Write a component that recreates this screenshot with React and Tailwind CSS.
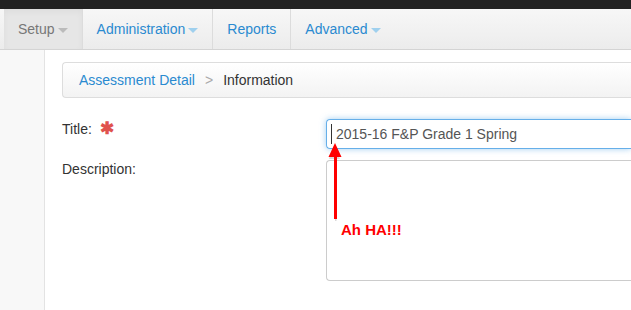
import React from 'react';

const Caret = ({ color }) => (
  <span
    className="inline-block ml-[3px] mt-[2px] w-0 h-0 border-l-[5px] border-r-[5px] border-t-[5px] border-l-transparent border-r-transparent"
    style={{ borderTopColor: color }}
  />
);

const NavItem = ({ label, active, caret, last }) => (
  <div
    className={`flex items-center h-full px-[14px] border-r ${
      last ? 'border-transparent' : 'border-[#dcdcdc]'
    } ${active ? 'bg-[#e6e6e6] text-[#777] shadow-[inset_0_3px_6px_rgba(0,0,0,0.04)]' : 'text-[#2a8ad0]'}`}
  >
    <span>{label}</span>
    {caret && <Caret color={active ? '#bbbbbb' : '#9fd0ee'} />}
  </div>
);

export default function App() {
  return (
    <div className="w-[631px] h-[310px] overflow-hidden bg-white font-['Liberation_Sans',Arial,sans-serif] text-[14px]">
      <div className="h-[9px] bg-[#222]" />
      <div className="h-[41px] flex items-stretch bg-gradient-to-b from-[#f7f7f7] to-[#ececec] border-b border-[#d4d4d4] pl-[4px]">
        <NavItem label="Setup" active caret />
        <NavItem label="Administration" caret />
        <NavItem label="Reports" />
        <NavItem label="Advanced" caret last />
      </div>
      <div className="flex h-[260px]">
        <div className="w-[45px] shrink-0 bg-[#f8f8f8] border-r border-[#e3e3e3]" />
        <div className="flex-1 pl-[17px] pt-[12px]">
          <div className="h-[36px] flex items-center pl-[16px] pt-[1px] rounded-l-[4px] border border-r-0 border-[#ddd] bg-gradient-to-b from-white to-[#f3f3f3]">
            <span className="text-[#2a8ad0]">Assessment Detail</span>
            <span className="text-[#aaa] mx-[10px]">&gt;</span>
            <span className="text-[#333]">Information</span>
          </div>
          <div className="flex mt-[21px] h-[30px]">
            <div className="w-[264px] shrink-0 flex items-start text-[#333]">
              <span>Title:</span>
              <span className="ml-[8px] text-[#e0524d] font-bold text-[17px] leading-[19px]">✱</span>
            </div>
            <div className="flex-1 relative h-[30px] rounded-l-[4px] border border-r-0 border-[#66afe9] shadow-[0_0_6px_rgba(102,175,233,0.6)] flex items-center pl-[9px] text-[#555]">
              2015-16 F&amp;P Grade 1 Spring
              <span className="absolute left-[4px] top-[4px] w-[1px] h-[20px] bg-[#333]" />
            </div>
          </div>
          <div className="flex mt-[11px]">
            <div className="w-[264px] shrink-0 text-[#333] -mt-[1px]">Description:</div>
            <div className="flex-1 relative h-[121px] rounded-l-[4px] border border-r-0 border-[#ccc]">
              <svg
                className="absolute left-[1px] top-[-18px]"
                width="16"
                height="80"
                viewBox="0 0 16 80"
              >
                <polygon points="4,1 10,15 6.5,15 6.5,77 5,77 5,15 -1,15" fill="#999" opacity="0.35" transform="translate(2,1)" />
                <polygon points="7,0 13.5,14 9,14 9,76 6,76 6,14 0.5,14" fill="#ff0000" />
              </svg>
              <span className="absolute left-[14px] top-[61px] text-[#ff0000] font-bold text-[15px] leading-[16px]">
                Ah HA!!!
              </span>
            </div>
          </div>
        </div>
      </div>
    </div>
  );
}
